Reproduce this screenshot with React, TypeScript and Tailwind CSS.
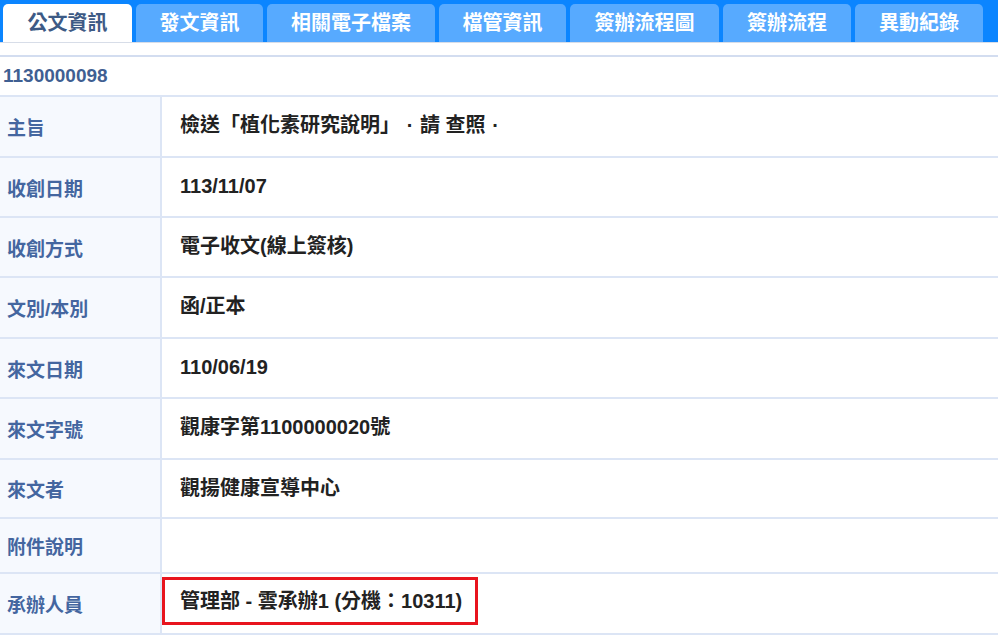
const tabs = [
  { label: "公文資訊", w: "w-[129px]", active: true },
  { label: "發文資訊", w: "w-[127px]" },
  { label: "相關電子檔案", w: "w-[168px]" },
  { label: "檔管資訊", w: "w-[127px]" },
  { label: "簽辦流程圖", w: "w-[149px]" },
  { label: "簽辦流程", w: "w-[128px]" },
  { label: "異動紀錄", w: "w-[128px]" },
];

// full-width punctuation drawn centred, as the TW glyphs are
const Dot = () => <span className="inline-block w-[20px] text-center">·</span>;

const rows = [
  {
    label: "主旨",
    value: (
      <>
        檢送「植化素研究說明」<Dot />請 查照<Dot />
      </>
    ),
    h: "h-[61px]",
  },
  { label: "收創日期", value: "113/11/07", h: "h-[60px]" },
  { label: "收創方式", value: "電子收文(線上簽核)", h: "h-[60px]" },
  { label: "文別/本別", value: "函/正本", h: "h-[61px]" },
  { label: "來文日期", value: "110/06/19", h: "h-[60px]" },
  { label: "來文字號", value: "觀康字第1100000020號", h: "h-[61px]" },
  { label: "來文者", value: "觀揚健康宣導中心", h: "h-[59px]" },
  { label: "附件說明", value: "", h: "h-[55px]" },
];

export default function App() {
  return (
    <div
      lang="zh-TW"
      className="w-[998px] h-[638px] bg-white overflow-hidden"
      style={{ fontFamily: '"Liberation Sans", "Noto Sans CJK TC", sans-serif' }}
    >
      <div className="h-[42px] bg-[#0b85ff] flex items-end gap-[4px] pl-[3px]">
        {tabs.map((t) => (
          <div
            key={t.label}
            className={`${t.w} h-[38px] rounded-t-[5px] flex items-center justify-center text-[20px] font-bold ${
              t.active ? "bg-white text-[#3d5a85]" : "bg-[#57aaff] text-white"
            }`}
          >
            {t.label}
          </div>
        ))}
      </div>
      <div className="h-[15px] border-t border-[#d7dde8] border-b-2 border-b-[#d3ddf0]" />
      <div className="h-[40px] flex items-center pl-[3px] border-b-2 border-[#dce5f5] text-[19px] font-bold text-[#3f5f92]">
        1130000098
      </div>
      {rows.map((r) => (
        <div key={r.label} className={`${r.h} flex border-b-2 border-[#dce5f5]`}>
          <div className="w-[162px] shrink-0 bg-[#f6f9fe] border-r-2 border-[#dce5f5] flex items-center pl-[7px] pt-[6px] text-[19px] font-bold text-[#4466a0]">
            {r.label}
          </div>
          <div className="flex-1 pl-[18px] pt-[13px] text-[20px] font-bold text-[#222]">{r.value}</div>
        </div>
      ))}
      <div className="h-[61px] flex border-b-2 border-[#dce5f5]">
        <div className="w-[162px] shrink-0 bg-[#f6f9fe] border-r-2 border-[#dce5f5] flex items-center pl-[7px] pt-[6px] text-[19px] font-bold text-[#4466a0]">
          承辦人員
        </div>
        <div className="flex-1 pt-[3px]">
          <div className="w-[316px] h-[48px] border-[3px] border-[#e8141e] flex items-center pl-[15px] text-[20px] font-bold text-[#222]">
            管理部 - 雲承辦1 (分機：10311)
          </div>
        </div>
      </div>
    </div>
  );
}
